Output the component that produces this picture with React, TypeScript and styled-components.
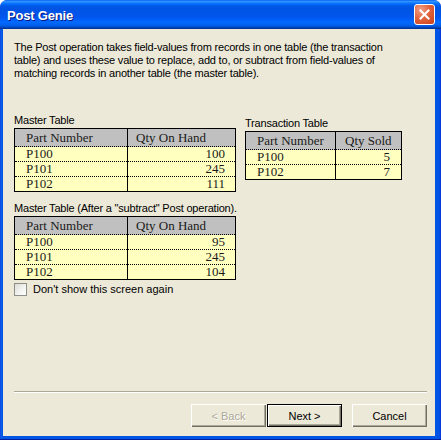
import React from "react";
import styled, { createGlobalStyle } from "styled-components";

const Global = createGlobalStyle`
  html, body { margin: 0; padding: 0; background: #ffffff; }
  #root { width: 441px; height: 440px; }
`;

const Window = styled.div`
  width: 441px;
  height: 440px;
  box-sizing: border-box;
  display: flex;
  flex-direction: column;
  border-radius: 7px 7px 0 0;
  overflow: hidden;
  background: linear-gradient(to right, #0831d9 0, #166aee 1px, #0055e5 2px, #0055e5 calc(100% - 2px), #0831d9 100%);
  padding: 0 6px 4px 3px;
  box-shadow: inset 0 -1px 0 #001ea0;
`;

const TitleBar = styled.div`
  height: 29px;
  margin: 0 -6px 0 -3px;
  flex: none;
  display: flex;
  align-items: center;
  justify-content: space-between;
  padding: 0 6px 0 7px;
  border-radius: 7px 7px 0 0;
  background: linear-gradient(
    to bottom,
    #0058ee 0%,
    #3593ff 4%,
    #288eff 7%,
    #127dff 10%,
    #036ffc 13%,
    #0262ee 17%,
    #0057e5 22%,
    #0054e3 28%,
    #0055eb 56%,
    #005bf5 66%,
    #026afe 76%,
    #0062ef 86%,
    #0052d6 92%,
    #0040ab 96%,
    #003092 100%
  );
`;

const Title = styled.div`
  font-family: "Liberation Sans", Arial, sans-serif;
  font-weight: bold;
  font-size: 13px;
  letter-spacing: -0.2px;
  color: #ffffff;
  text-shadow: 1px 1px 0 #0a1883;
  padding-top: 1px;
`;

const CloseButton = styled.div`
  width: 21px;
  height: 21px;
  box-sizing: border-box;
  border: 1px solid #ffffff;
  border-radius: 3px;
  background: radial-gradient(circle at 30% 25%, #f0a08a 0, #e2643f 45%, #c7401d 100%);
  display: flex;
  align-items: center;
  justify-content: center;
  margin-bottom: 1px;
`;

const Body = styled.div`
  flex: 1;
  background: #ece9d8;
  display: flex;
  flex-direction: column;
  padding: 12px 8px 9px 11px;
  font-family: "Liberation Sans", Arial, sans-serif;
  font-size: 11px;
  color: #000000;
`;

const Description = styled.div`
  line-height: 13px;
  letter-spacing: -0.2px;
  white-space: nowrap;
`;

const TablesRow = styled.div`
  display: flex;
  align-items: flex-start;
  gap: 9px;
  margin-top: 34px;
`;

const Section = styled.div<{ $offset?: number }>`
  display: flex;
  flex-direction: column;
  margin-top: ${(p) => p.$offset ?? 0}px;
`;

const Label = styled.div`
  line-height: 13px;
  height: 13px;
  margin-bottom: 1px;
  letter-spacing: -0.2px;
  white-space: nowrap;
`;

const Grid = styled.table<{ $width: number }>`
  width: ${(p) => p.$width}px;
  border-collapse: collapse;
  border: 1px solid #000000;
  font-family: "Liberation Serif", "Times New Roman", serif;
  font-size: 13px;
  font-weight: normal;
  color: #1a1a1a;
  table-layout: fixed;
`;

const HeadCell = styled.th<{ $pad: number }>`
  background: #c0c0c0;
  height: 17px;
  padding: 0 0 0 ${(p) => p.$pad}px;
  font-weight: 400;
  text-align: left;
  line-height: 15px;
  border-right: 1px solid #000000;
  &:last-child { border-right: none; }
`;

const Cell = styled.td<{ $right?: boolean; $pad: number }>`
  height: 14px;
  padding: 0 ${(p) => (p.$right ? p.$pad : 0)}px 0 ${(p) => (p.$right ? 0 : p.$pad)}px;
  line-height: 14px;
  text-align: ${(p) => (p.$right ? "right" : "left")};
  border-top: 1px dotted #000000;
  border-right: 1px solid #000000;
  background-color: transparent;
  background-image: linear-gradient(to right, #ffff00 50%, #ffffff 50%),
    linear-gradient(to bottom, #ffff00 50%, #ffffff 50%);
  background-size: 2px 2px, 2px 2px;
  background-blend-mode: screen;
  &:last-child { border-right: none; }
`;

const CheckRow = styled.label`
  display: flex;
  align-items: center;
  gap: 6px;
  margin-top: 3px;
  line-height: 13px;
`;

const CheckBox = styled.span`
  width: 13px;
  height: 13px;
  box-sizing: border-box;
  border: 1px solid #8f8f8a;
  background: linear-gradient(135deg, #dcdcd7 0%, #f4f4f2 60%, #ffffff 100%);
`;

const Footer = styled.div`
  margin-top: auto;
  display: flex;
  flex-direction: column;
`;

const Separator = styled.div`
  border-top: 1px solid #aca899;
  border-bottom: 1px solid #ffffff;
  height: 0;
  margin-bottom: 11px;
`;

const Buttons = styled.div`
  display: flex;
  justify-content: flex-end;
  align-items: center;
`;

const Button = styled.button<{ $default?: boolean; $gap?: number }>`
  width: 75px;
  height: 23px;
  box-sizing: border-box;
  margin-left: ${(p) => p.$gap ?? 0}px;
  font-family: "Liberation Sans", Arial, sans-serif;
  font-size: 11px;
  color: #000000;
  background: #ece9d8;
  padding: 0;
  border: ${(p) => (p.$default ? "1px solid #000000" : "none")};
  box-shadow: inset 1px 1px 0 #ffffff, inset -1px -1px 0 #716f64, inset -2px -2px 0 #aca899;
  &:disabled {
    color: #aca899;
    text-shadow: 1px 1px 0 #ffffff;
  }
`;

type Row = [string, string];

const DataTable: React.FC<{
  width: number;
  cols: [string, string];
  colWidth: number;
  headPad: [number, number];
  cellPad: [number, number];
  rows: Row[];
}> = ({ width, cols, colWidth, headPad, cellPad, rows }) => (
  <Grid $width={width}>
    <colgroup>
      <col style={{ width: colWidth }} />
      <col />
    </colgroup>
    <thead>
      <tr>
        <HeadCell $pad={headPad[0]}>{cols[0]}</HeadCell>
        <HeadCell $pad={headPad[1]}>{cols[1]}</HeadCell>
      </tr>
    </thead>
    <tbody>
      {rows.map(([a, b]) => (
        <tr key={a}>
          <Cell $pad={cellPad[0]}>{a}</Cell>
          <Cell $right $pad={cellPad[1]}>{b}</Cell>
        </tr>
      ))}
    </tbody>
  </Grid>
);

export default function App() {
  return (
    <>
      <Global />
      <Window>
        <TitleBar>
          <Title>Post Genie</Title>
          <CloseButton>
            <svg width="11" height="11" viewBox="0 0 11 11">
              <path d="M1.5 1.5 L9.5 9.5 M9.5 1.5 L1.5 9.5" stroke="#ffffff" strokeWidth="2" strokeLinecap="square" />
            </svg>
          </CloseButton>
        </TitleBar>
        <Body>
          <Description>
            The Post operation takes field-values from records in one table (the transaction
            <br />
            table) and uses these value to replace, add to, or subtract from field-values of
            <br />
            matching records in another table (the master table).
          </Description>
          <TablesRow>
            <Section>
              <Label>Master Table</Label>
              <DataTable
                width={222}
                cols={["Part Number", "Qty On Hand"]}
                colWidth={113}
                headPad={[11, 8]}
                cellPad={[11, 10]}
                rows={[
                  ["P100", "100"],
                  ["P101", "245"],
                  ["P102", "111"],
                ]}
              />
            </Section>
            <Section $offset={3}>
              <Label>Transaction Table</Label>
              <DataTable
                width={157}
                cols={["Part Number", "Qty Sold"]}
                colWidth={90}
                headPad={[11, 9]}
                cellPad={[11, 11]}
                rows={[
                  ["P100", "5"],
                  ["P102", "7"],
                ]}
              />
            </Section>
          </TablesRow>
          <Section $offset={10}>
            <Label>Master Table (After a "subtract" Post operation).</Label>
            <DataTable
              width={222}
              cols={["Part Number", "Qty On Hand"]}
              colWidth={113}
              headPad={[11, 8]}
              cellPad={[11, 10]}
              rows={[
                ["P100", "95"],
                ["P101", "245"],
                ["P102", "104"],
              ]}
            />
          </Section>
          <CheckRow>
            <CheckBox />
            <span>Don't show this screen again</span>
          </CheckRow>
          <Footer>
            <Separator />
            <Buttons>
              <Button disabled>&lt; Back</Button>
              <Button $default $gap={1}>Next &gt;</Button>
              <Button $gap={10}>Cancel</Button>
            </Buttons>
          </Footer>
        </Body>
      </Window>
    </>
  );
}
